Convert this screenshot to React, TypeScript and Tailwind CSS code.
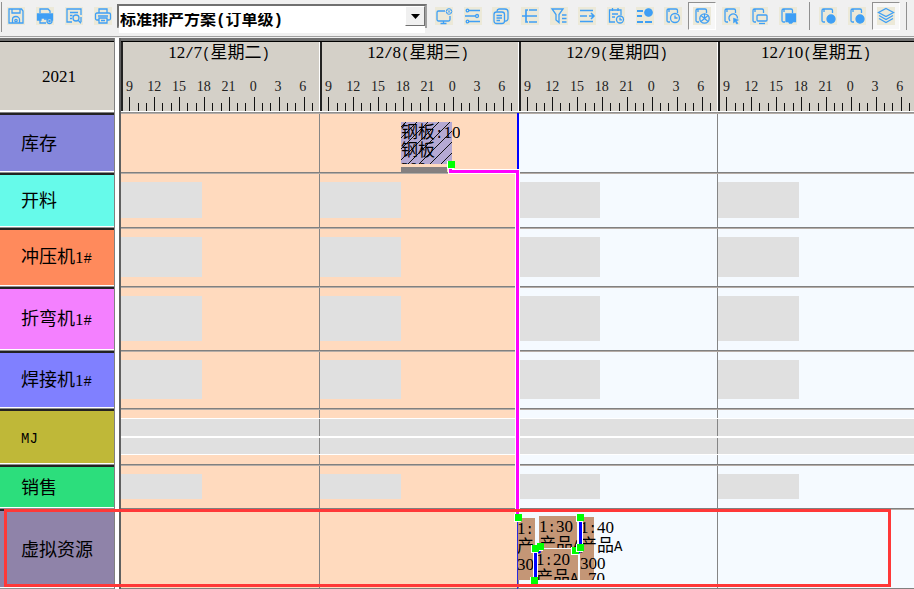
import { Fragment, useState } from "react";
import type { ReactNode } from "react";

const BLUE = "#3f9ff5";

/* Numerals are set in a serif face, symbols and letters in a fixed-width one. */
function Mixed({ text }: { text: string }) {
  const parts = text.split(/([0-9]+|[^0-9\u4e00-\u9fff]+)/).filter(Boolean);
  return (
    <>
      {parts.map((part, i) => {
        if (/^[0-9]/.test(part)) {
          return <span key={i} className="font-['Liberation_Serif',serif] text-[17px]">{part}</span>;
        }
        if (/^[\u4e00-\u9fff]/.test(part)) return <Fragment key={i}>{part}</Fragment>;
        return <span key={i} className="font-['Liberation_Mono',monospace] text-[14px]">{part}</span>;
      })}
    </>
  );
}

const page = <path d="M6 15H4.5A1.5 1.5 0 0 1 3 13.500V3.500A1.500 1.500 0 0 1 4.500 2H12a1.500 1.500 0 0 1 1.500 1.500V6M5 2v3" />;

const icons: Record<string, ReactNode> = {
  保存: (
    <>
      <path d="M2 2h12.500L16 4v12H2z" />
      <path d="M5 2v4h8V2M5.500 16v-3.500a3.500 3 0 0 1 7 0V16" />
      <circle cx="9" cy="13.500" r="1.200" />
    </>
  ),
  打印设置: (
    <>
      <path d="M4 6V2h8l2 2v2" />
      <path d="M1.500 7h15v6h-3v-2H5v2H1.500z" fill={BLUE} />
      <path d="M4 12v4h6M8 12h4" />
      <circle cx="13.500" cy="14" r="2.500" fill="#ece9d8" />
      <circle cx="13.500" cy="14" r=".7" />
    </>
  ),
  预览: (
    <>
      <path d="M7 15H2V2h14v6M16 10v5M5 5.500h8M5 8.500h2.500M5 11.500h2" />
      <circle cx="11" cy="11" r="3" />
      <path d="m13.200 13.200 2.800 3" />
    </>
  ),
  打印: (
    <>
      <path d="M5 6V2h8v4M4.500 13H3a1.500 1.500 0 0 1-1.500-1.500v-4A1.500 1.500 0 0 1 3 6h12a1.500 1.500 0 0 1 1.500 1.500v4A1.500 1.500 0 0 1 15 13h-1.500M4 9h10M5 11h8v5H5zM7 13.500h4" />
    </>
  ),
  显示器: (
    <>
      <path d="M10 4H3.500A1.500 1.500 0 0 0 2 5.500v7A1.500 1.500 0 0 0 3.500 14h10a1.500 1.500 0 0 0 1.500-1.500V9M8.500 14v2.500M5.500 16.500h6" />
      <circle cx="14" cy="4.500" r="2.800" strokeWidth="1" />
      <path d="m12.500 3 3 3m0-3-3 3" strokeWidth=".8" />
    </>
  ),
  参数: (
    <>
      <path d="M5 3.500h11M1 9h10M5 14.500h11" />
      <circle cx="3.500" cy="3.500" r="1.300" />
      <circle cx="13" cy="9" r="1.500" />
      <circle cx="3.500" cy="14.500" r="1.300" />
    </>
  ),
  复制: (
    <>
      <rect x="2" y="5" width="10.500" height="11.500" rx="2.500" />
      <path d="M5 4.500A2.500 2.500 0 0 1 7 2h6a3 3 0 0 1 3 3v6.500a2.500 2.500 0 0 1-3 2.500M4.500 8.500H10M4.500 11H10M4.500 13.500H8" />
    </>
  ),
  层级: <path d="M8 3h8M8 9h8M8 15h8M7 3H5v12h2M1 9h7" strokeWidth="1.700" />,
  筛选: <path d="M2 2h11L9 7.500v8L6 13V7.500zM12 8h4.500M12 11.500h4.500M12 15h4.500" />,
  移动: <path d="M2 3.500h13M2 9h7M2 14.500h13M13 6l3 3-3 3M11 9h5" strokeWidth="1.500" />,
  计划时间: (
    <>
      <path d="M8 15H2.500V3H14v5M5.500 1v3M11 1v3M5 7h6M5 10h3" />
      <circle cx="13" cy="12.500" r="3.500" />
      <path d="M13 10.500v2.300h2" />
    </>
  ),
  任务: (
    <>
      <path d="M1 4h6M1 9h5M1 15h6M9 15h7" strokeWidth="2" />
      <circle cx="12.500" cy="5.500" r="3.700" fill={BLUE} />
    </>
  ),
  时钟: (
    <>
      {page}
      <circle cx="11" cy="11" r="4.500" />
      <path d="M11 8.500V11h2.500" />
    </>
  ),
  禁用: (
    <>
      {page}
      <circle cx="11.500" cy="11.500" r="4.700" />
      <path d="m8 8.500 7 6M8 14.500l7-6M11.500 7v4" strokeWidth="1.200" />
    </>
  ),
  旋转: (
    <>
      {page}
      <path d="M8 14a4.300 4.300 0 1 1 7.500-2.500" />
      <path d="m11.500 11 5 2-2 1 1.500 2.500-1.500.5-1.200-2.500L11.500 16z" fill={BLUE} strokeWidth=".5" />
    </>
  ),
  屏幕: (
    <>
      {page}
      <rect x="7" y="8" width="10" height="6" rx="1" />
      <path d="M9 16.500h6" />
    </>
  ),
  消息: (
    <>
      {page}
      <path d="M7 7h9.500v7.500H14L12.500 16h-2L9.500 14.500H7z" fill={BLUE} />
    </>
  ),
  圆点: (
    <>
      {page}
      <circle cx="12" cy="12" r="4" fill={BLUE} />
    </>
  ),
  图层: <path d="m9 1.500 7.500 4L9 9.500l-7.500-4zM2 8.500 9 12.500l7-4M2 11.500l7 4 7-4" strokeWidth="1.300" />,
};

function Tool({ name, label, pressed }: { name: string; label?: string; pressed?: boolean }) {
  return (
    <button
      type="button"
      aria-label={label ?? name}
      aria-pressed={pressed}
      className={
        "flex h-7 w-7 shrink-0 items-center justify-center border " +
        (pressed ? "border-t-[#909090] border-r-white border-b-white border-l-[#909090] bg-[#f7f7f7]" : "border-transparent")
      }
    >
      <svg viewBox="0 0 18 18" className="h-[18px] w-[18px] bg-[#ece9d8]" fill="none" stroke={BLUE} strokeWidth="1.300">
        {icons[name]}
      </svg>
    </button>
  );
}

function Toolbar() {
  const [plan, setPlan] = useState("order");
  return (
    <div role="toolbar" aria-label="工具栏" className="flex h-[37px] items-start overflow-hidden border-b border-[#a0a0a0] bg-[#f0f0f0] pt-0.5">
      <div className="h-[30px] w-0.5 shrink-0 border-r border-[#909090]" />
      <div className="flex w-[115px] shrink-0 justify-around">
        <Tool name="保存" />
        <Tool name="打印设置" />
        <Tool name="预览" />
        <Tool name="打印" />
      </div>
      <div className="relative mt-0.5 h-6 w-[310px] shrink-0 border-2 border-t-[#707070] border-r-[#a0a0a0] border-b-[#a0a0a0] border-l-[#707070] bg-white">
        <select
          aria-label="排产方案"
          value={plan}
          onChange={(e) => setPlan(e.target.value)}
          className="h-5 w-full appearance-none bg-white pb-1 pl-px font-['Liberation_Mono','Noto_Sans_CJK_SC',monospace] text-[16px] leading-4 font-bold text-black outline-none"
        >
          <option value="order">标准排产方案(订单级)</option>
        </select>
        <span className="pointer-events-none absolute top-0 right-0 flex h-5 w-5 items-center justify-center border border-t-white border-r-[#707070] border-b-[#707070] border-l-white bg-[#f0f0f0]">
          <svg viewBox="0 0 9 5" className="h-[5px] w-[9px]">
            <path d="M0 0h9L4.500 5z" />
          </svg>
        </span>
      </div>
      <div className="ml-[3px] flex w-[372px] shrink-0 justify-between">
        <Tool name="显示器" />
        <Tool name="参数" />
        <Tool name="复制" />
        <Tool name="层级" />
        <Tool name="筛选" />
        <Tool name="移动" />
        <Tool name="计划时间" />
        <Tool name="任务" />
        <Tool name="时钟" />
        <Tool name="禁用" pressed />
        <Tool name="旋转" />
        <Tool name="屏幕" />
        <Tool name="消息" />
      </div>
      <div className="mr-1 ml-[7px] h-7 w-px shrink-0 bg-[#909090]" />
      <div className="flex shrink-0 gap-px">
        <Tool name="圆点" label="标记一" />
        <Tool name="圆点" label="标记二" />
        <Tool name="图层" pressed />
      </div>
      <div className="ml-1.5 h-7 w-px shrink-0 bg-[#909090]" />
    </div>
  );
}

type Load = "none" | "shift" | "full";

const resources: { name: string; color: string; height: string; load: Load }[] = [
  { name: "库存", color: "bg-[#8585db]", height: "h-[60px]", load: "none" },
  { name: "开料", color: "bg-[#66faea]", height: "h-[55px]", load: "shift" },
  { name: "冲压机1#", color: "bg-[#ff8a5c]", height: "h-[59px]", load: "shift" },
  { name: "折弯机1#", color: "bg-[#f480ff]", height: "h-[64px]", load: "shift" },
  { name: "焊接机1#", color: "bg-[#8080ff]", height: "h-[58px]", load: "shift" },
  { name: "MJ", color: "bg-[#bfb838]", height: "h-[56px]", load: "full" },
  { name: "销售", color: "bg-[#2cde7c]", height: "h-[44px]", load: "shift" },
  { name: "虚拟资源", color: "bg-[#8f83a9]", height: "h-[80px]", load: "none" },
];

const days = [
  { title: "12/7(星期二)", past: true },
  { title: "12/8(星期三)", past: true },
  { title: "12/9(星期四)", past: false },
  { title: "12/10(星期五)", past: false },
];

const hours = [9, 12, 15, 18, 21, 0, 3, 6];

function DayHeader({ title }: { title: string }) {
  return (
    <div className="flex h-[69px] w-[199px] shrink-0 flex-col justify-between border-r border-l-2 border-r-white border-l-[#222] bg-[#d4d0c8]">
      <div className="pr-1 text-center text-[17px] leading-[18px]">
        <Mixed text={title} />
      </div>
      <div className="flex flex-col gap-0.5">
        <div className="mr-1 -ml-1.5 grid grid-cols-8 text-center font-['Liberation_Serif',serif] text-[14px] leading-4 text-[#222]">
          {hours.map((h) => (
            <span key={h}>{h}</span>
          ))}
        </div>
        <div className="-mr-px -ml-px flex h-[14px] items-end">
          {Array.from({ length: 24 }, (_, i) => (
            <i key={i} className={"flex-1 " + (i === 23 ? "" : "border-r border-[#111] ") + (i % 3 === 0 ? "h-full" : "h-2")} />
          ))}
        </div>
      </div>
    </div>
  );
}

function DayCell({ past, load }: { past: boolean; load: Load }) {
  return (
    <div className={"w-[199px] shrink-0 border-r border-[#858585] pt-2 pb-[9px] " + (past ? "bg-[#ffdabe]" : "bg-[#f5faff]")}>
      {load === "shift" && <div className="h-full w-[81px] bg-[#e0e0e0]" />}
      {load === "full" && (
        <div className="-mr-px flex h-full flex-col gap-0.5 border-y border-white bg-white">
          <div className="flex-1 border-r border-[#858585] bg-[#e0e0e0]" />
          <div className="flex-1 border-r border-[#858585] bg-[#e0e0e0]" />
        </div>
      )}
    </div>
  );
}

/* Task blocks sit on the free time canvas; positions are relative to the chart body. */
function Task({ place, lines, clip }: { place: string; lines: string[]; clip?: boolean }) {
  return (
    <div className={"absolute text-[17px] leading-[18px] whitespace-nowrap " + place + (clip ? " overflow-hidden" : "")}>
      {lines.map((line, i) => (
        <div key={i} className="h-[18px]">
          <Mixed text={line} />
        </div>
      ))}
    </div>
  );
}

const handles = [
  [327, 48],
  [394, 401],
  [456, 401],
  [416, 430],
  [411, 432],
  [451, 434],
  [456, 431],
  [410, 464],
];

function Canvas() {
  return (
    <div className="absolute inset-0 overflow-hidden">
      <svg className="absolute inset-0 h-full w-full">
        <defs>
          <clipPath id="stock">
            <rect x="280" y="9" width="51" height="42" />
          </clipPath>
        </defs>
        <rect x="280" y="9" width="51" height="42" fill="#b5a9d3" />
        <g clipPath="url(#stock)" stroke="#111" strokeWidth="1">
          {Array.from({ length: 10 }, (_, i) => (
            <path key={i} d={`M${274 + i * 11 - 44} 53l46-46`} />
          ))}
        </g>
        <rect x="280" y="54" width="46" height="5" fill="#858080" />
      </svg>
      <Task place="top-[9px] left-[280px] h-[42px]" clip lines={["钢板:10", "钢板", "300"]} />
      <Task place="top-[405px] left-[396px] h-[62px] w-[18px] bg-[#c49676]" clip lines={["1:10", "产品A", "300"]} />
      <Task place="top-[403px] left-[418px] h-[32px] w-[38px] bg-[#c49676]" clip lines={["1:30", "产品A"]} />
      <Task place="top-[436px] left-[415px] h-[31px] w-[42px] bg-[#c49676]" clip lines={["1:20", "产品A"]} />
      <div className="absolute top-[404px] left-[459px] h-[63px] w-[14px] bg-[#c49676]" />
      <Task place="top-[455px] left-[467px] h-[12px]" clip lines={["70"]} />
      <Task place="top-[404px] left-[459px]" lines={["1:40", "产品A", "300"]} />
      <svg className="absolute inset-0 h-full w-full" fill="none">
        <path d="M397 0v56" stroke="#00f" strokeWidth="2" />
        <path d="M396.500 404v80" stroke="#2a2ae0" strokeWidth="1" />
        <path d="M329.500 53v5.500h67V404" stroke="#fff" strokeWidth="5" />
        <path d="M329.500 53v5.500h67V404" stroke="#f0f" strokeWidth="3" />
        <path d="M459.500 405v27M414.500 436v30" stroke="#fff" strokeWidth="5" />
        <path d="M459.500 405v27M414.500 436v30M456 437l3 3M417 437l2 3" stroke="#00f" strokeWidth="3" />
        {handles.map(([x, y], i) => (
          <g key={i}>
            <rect x={x - 1} y={y} width="7" height="8" fill="#fff" />
            <rect x={x} y={y} width="7" height="7" fill="#0f0" />
          </g>
        ))}
      </svg>
    </div>
  );
}

export default function App() {
  return (
    <main className="relative w-full overflow-hidden bg-[#f0f0f0] font-['Noto_Sans_CJK_SC',sans-serif] text-black">
      <Toolbar />
      <div className="mt-px flex bg-white">
        <aside className="w-[115px] shrink-0 border-r border-[#808080]">
          <div className="h-[4px] border-b border-black bg-[#707070]" />
          <div className="flex h-[70px] items-center justify-center border-b-2 border-b-white bg-[#d4d0c8] pt-0.5 pl-1 text-[17px]">
            <Mixed text="2021" />
          </div>
          <div className="h-px bg-[#808080]" />
          {resources.map((r) => (
            <div key={r.name} className={"border-b border-[#909090] " + r.height}>
              <div className={"flex h-full items-center border-t-2 border-b border-t-[#222] border-b-white pb-0.5 pl-[21px] text-[18px] whitespace-nowrap " + r.color}>
                <span>
                  <Mixed text={r.name} />
                </span>
              </div>
            </div>
          ))}
        </aside>
        <section aria-label="排产甘特图" className="ml-1 min-w-0 flex-1 overflow-hidden border-l-2 border-[#606060]">
          <div className="h-[4px] border-b border-black bg-[#707070]" />
          <div className="flex">
            {days.map((d) => (
              <DayHeader key={d.title} title={d.title} />
            ))}
          </div>
          <div className="h-0.5 border-t border-t-white bg-[#909090]" />
          <div className="relative">
            {resources.map((r) => (
              <div key={r.name} className={"flex border-t border-b border-t-[#b5aca6] border-b-[#808080] " + r.height}>
                {days.map((d) => (
                  <DayCell key={d.title} past={d.past} load={r.load} />
                ))}
              </div>
            ))}
            <Canvas />
          </div>
        </section>
      </div>
      <div className="pointer-events-none absolute right-[23px] bottom-0.5 left-1 h-[78px] border-3 border-[#ff3838]" />
    </main>
  );
}
